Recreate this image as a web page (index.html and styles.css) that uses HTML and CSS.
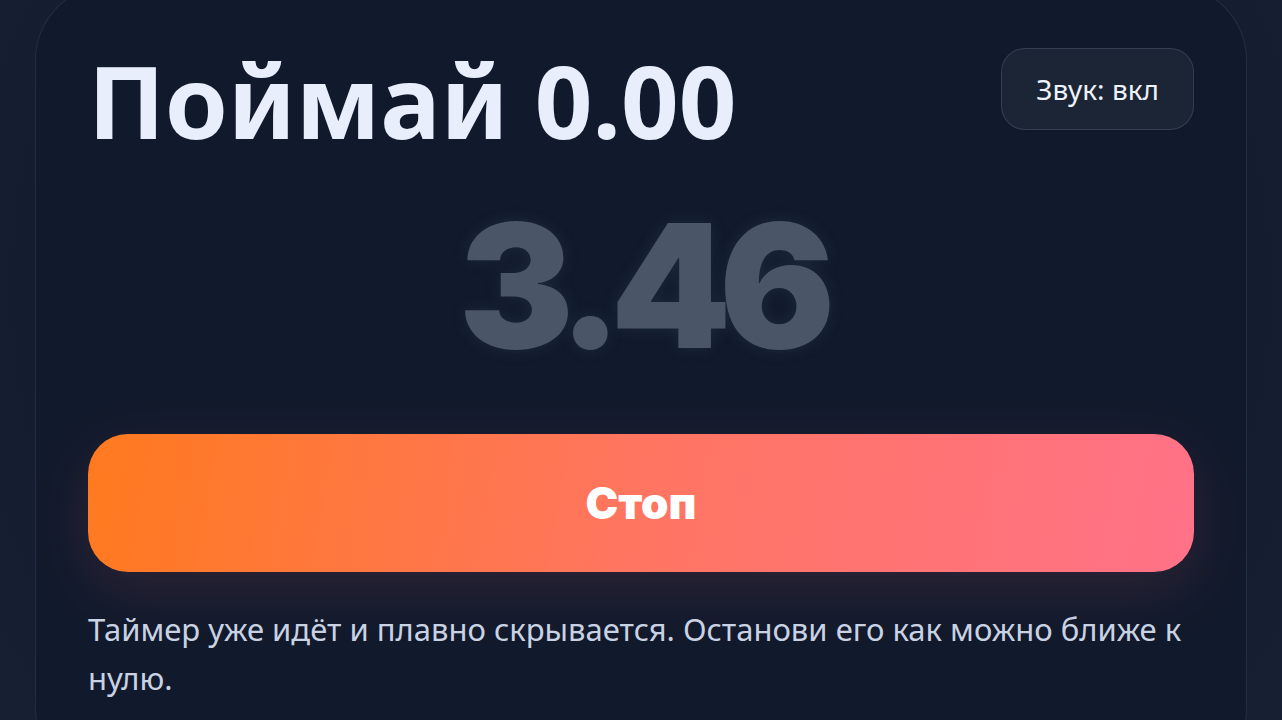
FILE: index.html
```html
<!DOCTYPE html>
<html lang="ru">
  <head>
    <meta charset="utf-8" />
    <title>Поймай 0.00</title>
    <meta name="viewport" content="width=device-width, initial-scale=1" />
    <link rel="stylesheet" href="styles.css">
  </head>
  <body>
    <main class="game">
      <header class="game-head">
        <h1>Поймай 0.00</h1>
        <button class="sound-toggle" type="button">Звук: вкл</button>
      </header>
      <div class="timer">3.46</div>
      <button class="stop-btn" type="button">Стоп</button>
      <p class="hint">Таймер уже идёт и плавно скрывается. Останови его как можно ближе к нулю.</p>
    </main>
  </body>
</html>
```

FILE: styles.css
```css
html,
body {
  margin: 0;
  padding: 0;
  height: 100%;
  overflow: hidden;
}
body {
  background: radial-gradient(circle at 50% 40%, #10182a 0%, #131b2d 60%, #162032 100%);
  padding: 0 35px;
  font-family: 'Noto Sans', 'Open Sans', sans-serif;
  color: #e6ecf7;
}

.game {
  margin-top: -15px;
  padding: 54px 52px 80px;
  border: 1px solid rgba(148, 163, 184, 0.14);
  border-radius: 75px;
  background: #111a2c;
}

.game-head {
  display: flex;
  justify-content: space-between;
  align-items: flex-start;
}
.game-head h1 {
  margin: 0;
  font-size: 101px;
  font-weight: 700;
  line-height: 1.2;
  color: #e8eefb;
}

.sound-toggle {
  margin-top: 8px;
  height: 82px;
  padding: 0 34px;
  border: 1px solid rgba(148, 163, 184, 0.2);
  border-radius: 24px;
  background: #1c2536;
  font-family: 'Noto Sans', sans-serif;
  font-size: 28px;
  color: #eef2f9;
}

.timer {
  margin-top: 38px;
  text-align: center;
  font-family: Inter, 'Noto Sans', sans-serif;
  font-size: 172px;
  font-weight: 900;
  line-height: 1;
  letter-spacing: -12px;
  color: #4a5568;
  text-shadow: 0 0 16px rgba(90, 110, 140, 0.18);
}

.stop-btn {
  display: block;
  width: 100%;
  height: 138px;
  margin-top: 63px;
  border: 0;
  border-radius: 40px;
  background: linear-gradient(100deg, #ff7a1e 0%, #ff7561 50%, #ff7288 100%);
  box-shadow: 0 18px 60px rgba(255, 110, 120, 0.12);
  font-family: Inter, sans-serif;
  font-size: 44px;
  font-weight: 900;
  color: #fff;
}

.hint {
  margin: 33px 0 0;
  font-size: 31px;
  line-height: 49px;
  color: #c9d2e3;
}
```
